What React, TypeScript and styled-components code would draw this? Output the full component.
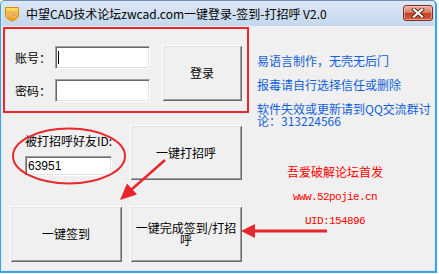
import React from "react";
import styled, { createGlobalStyle } from "styled-components";

const Global = createGlobalStyle`
  html, body { margin: 0; padding: 0; background: #ffffff; }
  body { font-family: "Noto Sans CJK SC", "Liberation Sans", sans-serif; font-size: 12px; color: #000; }
  #root { width: 439px; height: 274px; overflow: hidden; }
`;

const Window = styled.div`
  width: 437px;
  height: 273px;
  box-sizing: border-box;
  border-top: 1px solid #6f8db0;
  border-left: 1px solid #39a6dc;
  border-right: 2px solid #39a6dc;
  border-bottom: 2px solid #39a6dc;
  border-radius: 5px 5px 0 0;
  background: #dce9f6;
  padding: 0 1px 1px 1px;
  display: flex;
  flex-direction: column;
`;

const TitleBar = styled.div`
  height: 25px;
  flex: none;
  display: flex;
  align-items: center;
  padding-left: 2px;
  background: linear-gradient(#dce8f6, #c4d7ed);
  border-radius: 4px 4px 0 0;
`;

const TitleText = styled.span`
  margin-left: 6px;
  font-size: 12px;
  line-height: 16px;
  color: #000;
  white-space: nowrap;
`;

const CloseButton = styled.div`
  margin-left: auto;
  margin-right: 1px;
  align-self: flex-start;
  margin-top: 4px;
  width: 30px;
  height: 16px;
  box-sizing: border-box;
  border: 1px solid #7d2d22;
  border-radius: 3px;
  background: linear-gradient(#eab0a2 0%, #dc8068 45%, #c43e26 52%, #d0603f 100%);
  box-shadow: inset 0 0 0 1px rgba(255, 220, 210, 0.5);
  display: flex;
  align-items: center;
  justify-content: center;
`;

const Client = styled.div`
  position: relative;
  flex: 1;
  background: #f0f0f0;
  display: flex;
  flex-direction: column;
`;

const TopRow = styled.div`
  display: flex;
  align-items: flex-start;
  height: 87px;
  box-sizing: border-box;
  padding: 1px 0 0 1px;
`;

const LoginBox = styled.div`
  flex: none;
  width: 246px;
  height: 86px;
  box-sizing: border-box;
  border: 2px solid #e8262c;
  display: flex;
  align-items: flex-start;
  padding: 16px 0 0 10px;
`;

const Fields = styled.div`
  margin-top: 1px;
  display: grid;
  grid-template-columns: 40px 95px;
  grid-auto-rows: 23px;
  row-gap: 10px;
  align-items: center;
`;

const Label = styled.span`
  font-size: 12px;
  line-height: 14px;
  white-space: nowrap;
`;

const TextBox = styled.div<{ $w: number; $h: number }>`
  width: ${(p) => p.$w}px;
  height: ${(p) => p.$h}px;
  box-sizing: border-box;
  background: #fff;
  border-style: solid;
  border-width: 1px;
  border-color: #a0a0a0 #ffffff #ffffff #a0a0a0;
  box-shadow: inset 1px 1px 0 #696969, inset -1px -1px 0 #e3e3e3;
  display: flex;
  align-items: center;
  padding-left: 2px;
  font-family: "Liberation Sans", "Noto Sans CJK SC", sans-serif;
  font-size: 12px;
`;

const Caret = styled.span`
  width: 1px;
  height: 13px;
  background: #000;
`;

const Button = styled.div<{ $w: number; $h: number }>`
  width: ${(p) => p.$w}px;
  height: ${(p) => p.$h}px;
  box-sizing: border-box;
  background: #f0f0f0;
  box-shadow: inset 1px 1px 0 #ffffff, inset -1px -1px 0 #696969, inset 2px 2px 0 #e3e3e3,
    inset -2px -2px 0 #a0a0a0;
  display: flex;
  align-items: center;
  justify-content: center;
  text-align: center;
  padding: 0 3px;
  font-size: 12px;
  line-height: 12px;
`;

const LoginButton = styled(Button)`
  margin-left: 12px;
`;

const Info = styled.div`
  margin-left: 8px;
  padding-top: 28px;
  width: 178px;
  flex: none;
  color: #1060d8;
  font-size: 12px;
  line-height: 12px;
  display: flex;
  flex-direction: column;
  gap: 12px;
`;

const BottomRow = styled.div`
  display: flex;
  align-items: flex-start;
  margin-top: 12px;
  padding-left: 8px;
`;

const ButtonGrid = styled.div`
  display: grid;
  grid-template-columns: 112px 112px;
  grid-template-rows: 55px 56px;
  column-gap: 8px;
  row-gap: 26px;
`;

const IdField = styled.div`
  display: flex;
  flex-direction: column;
  padding: 9px 0 0 15px;
  gap: 8px;
`;

const Promo = styled.div`
  width: 186px;
  padding-top: 40px;
  color: #ff0000;
  text-align: center;
  display: flex;
  flex-direction: column;
  align-items: center;
`;

const PromoTitle = styled.div`
  font-size: 12px;
  line-height: 14px;
`;

const PromoMono = styled.div<{ $top: number }>`
  margin-top: ${(p) => p.$top}px;
  font-family: "Liberation Mono", monospace;
  font-size: 11px;
  letter-spacing: -0.6px;
  line-height: 12px;
`;

const Overlay = styled.svg`
  position: absolute;
  left: 0;
  top: 0;
  pointer-events: none;
  overflow: visible;
`;

const AppIcon = () => (
  <svg width="16" height="16" viewBox="0 0 16 16">
    <defs>
      <linearGradient id="zwg" x1="0" y1="0" x2="0" y2="1">
        <stop offset="0" stopColor="#ffe36a" />
        <stop offset="1" stopColor="#f29a12" />
      </linearGradient>
    </defs>
    <path d="M1.5 1.5 H14.5 V9 C14.5 12 11 14 8 15 C5 14 1.5 12 1.5 9 Z" fill="url(#zwg)" stroke="#d98a10" strokeWidth="1" />
    <text x="8" y="10.5" textAnchor="middle" fontFamily="Liberation Sans, sans-serif" fontWeight="bold" fontSize="7" fill="#ffffff" stroke="#e07a00" strokeWidth="0.4">ZW</text>
  </svg>
);

const CloseGlyph = () => (
  <svg width="14" height="10" viewBox="0 0 14 10">
    <path d="M3 1.5 L11 8.5 M11 1.5 L3 8.5" stroke="#6a2016" strokeWidth="4" strokeLinecap="square" />
    <path d="M3 1.5 L11 8.5 M11 1.5 L3 8.5" stroke="#ffffff" strokeWidth="2.2" strokeLinecap="square" />
  </svg>
);

export default function App() {
  return (
    <>
      <Global />
      <Window>
        <TitleBar>
          <AppIcon />
          <TitleText>中望CAD技术论坛zwcad.com一键登录-签到-打招呼 V2.0</TitleText>
          <CloseButton>
            <CloseGlyph />
          </CloseButton>
        </TitleBar>
        <Client>
          <TopRow>
            <LoginBox>
              <Fields>
                <Label>账号：</Label>
                <TextBox $w={95} $h={23}>
                  <Caret />
                </TextBox>
                <Label>密码：</Label>
                <TextBox $w={95} $h={23} />
              </Fields>
              <LoginButton $w={80} $h={56}>登录</LoginButton>
            </LoginBox>
            <Info>
              <div>易语言制作，无壳无后门</div>
              <div>报毒请自行选择信任或删除</div>
              <div>软件失效或更新请到QQ交流群讨论：313224566</div>
            </Info>
          </TopRow>
          <BottomRow>
            <ButtonGrid>
              <IdField>
                <Label>被打招呼好友ID:</Label>
                <TextBox $w={87} $h={20}>63951</TextBox>
              </IdField>
              <Button $w={112} $h={55}>一键打招呼</Button>
              <Button $w={112} $h={56}>一键签到</Button>
              <Button $w={112} $h={56}>一键完成签到/打招呼</Button>
            </ButtonGrid>
            <Promo>
              <PromoTitle>吾爱破解论坛首发</PromoTitle>
              <PromoMono $top={12}>www.52pojie.cn</PromoMono>
              <PromoMono $top={12}>UID:154896</PromoMono>
            </Promo>
          </BottomRow>
          <Overlay width="432" height="244">
            <ellipse cx="67" cy="130" rx="56" ry="27.5" fill="none" stroke="#e8262c" strokeWidth="2" />
            <line x1="163" y1="134" x2="129" y2="164" stroke="#e8262c" strokeWidth="2.5" />
            <polygon points="118,174 135,168.5 125,157.5" fill="#e8262c" />
            <line x1="325" y1="205" x2="250" y2="205" stroke="#e8262c" strokeWidth="3" />
            <polygon points="239,205 253,198 253,212" fill="#e8262c" />
          </Overlay>
        </Client>
      </Window>
    </>
  );
}
